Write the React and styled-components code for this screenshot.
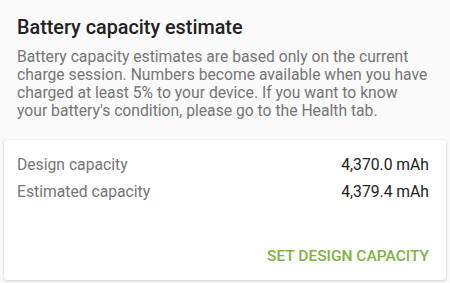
import React from "react";
import styled, { createGlobalStyle } from "styled-components";

const Global = createGlobalStyle`
  html, body { margin: 0; padding: 0; background: #fafafa; }
  body { font-family: Roboto, "Noto Sans", sans-serif; }
`;

const Page = styled.div`
  width: 450px;
  height: 283px;
  box-sizing: border-box;
  padding: 15px 4px 0 4px;
  display: flex;
  flex-direction: column;
  overflow: hidden;
`;

const Header = styled.div`
  padding: 0 17px 0 13px;
`;

const Title = styled.h1`
  margin: 0;
  font-size: 19.8px;
  font-weight: 500;
  line-height: 26px;
  color: #222;
`;

const Description = styled.p`
  margin: 7px 0 0;
  font-size: 15.7px;
  line-height: 18px;
  color: #757575;
`;

const Card = styled.div`
  margin-top: 20px;
  background: #fff;
  box-shadow: 0 1px 3px rgba(0,0,0,0.16), 0 0 1px rgba(0,0,0,0.14);
  border-radius: 2px;
  padding: 11px 17px 14px 13px;
  display: flex;
  flex-direction: column;
  height: 140px;
  box-sizing: border-box;
`;

const Row = styled.div`
  display: flex;
  justify-content: space-between;
  font-size: 15.7px;
  line-height: 27px;
`;

const Label = styled.span`
  color: #757575;
`;

const Value = styled.span`
  color: #212121;
`;

const Actions = styled.div`
  margin-top: auto;
  display: flex;
  justify-content: flex-end;
`;

const Button = styled.button`
  border: none;
  background: none;
  padding: 0;
  font-family: Roboto, sans-serif;
  font-size: 15.5px;
  font-weight: 500;
  color: #7cb342;
  text-transform: uppercase;
  line-height: 20px;
  cursor: pointer;
`;

export default function App() {
  return (
    <>
      <Global />
      <Page>
        <Header>
          <Title>Battery capacity estimate</Title>
          <Description>
            Battery capacity estimates are based only on the current charge session. Numbers become available when you have charged at least 5% to your device. If you want to know your battery's condition, please go to the Health tab.
          </Description>
        </Header>
        <Card>
          <Row><Label>Design capacity</Label><Value>4,370.0 mAh</Value></Row>
          <Row><Label>Estimated capacity</Label><Value>4,379.4 mAh</Value></Row>
          <Actions><Button>Set design capacity</Button></Actions>
        </Card>
      </Page>
    </>
  );
}
